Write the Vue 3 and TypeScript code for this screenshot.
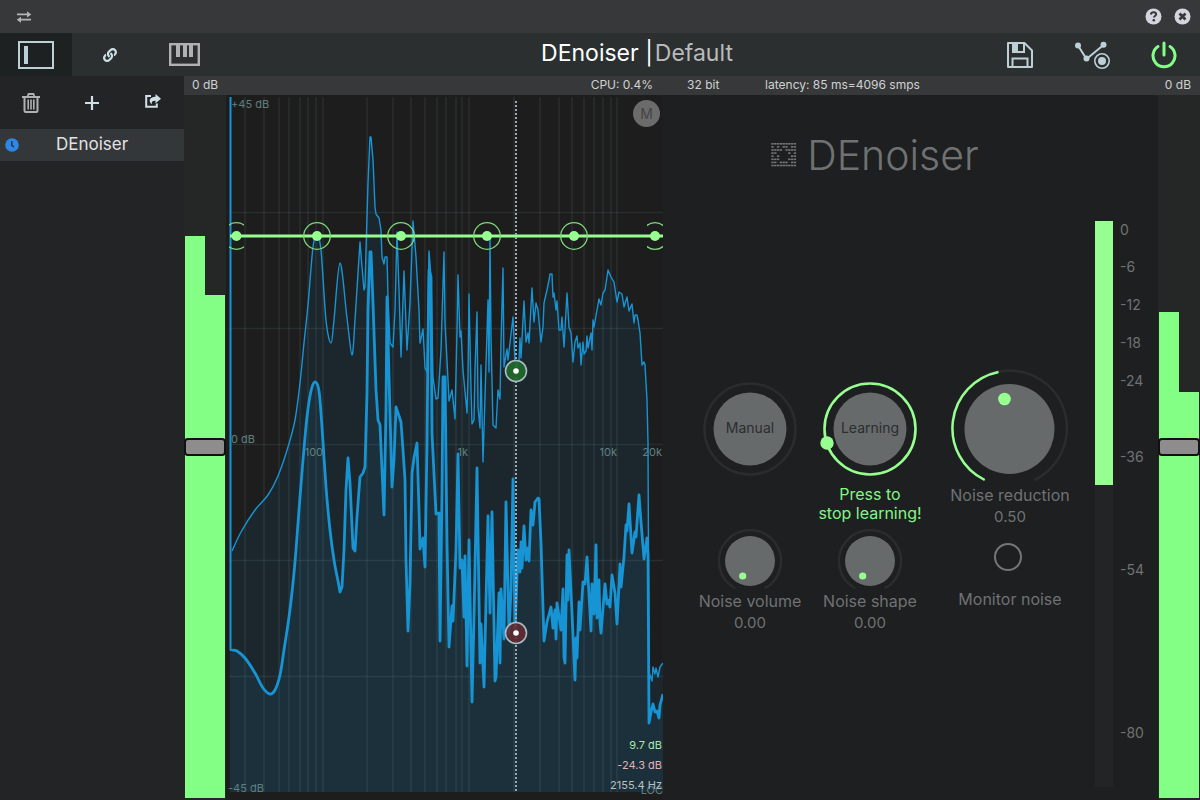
<script setup lang="ts">
import { ref } from 'vue'

type Point = [number, number]

const gridX = [
  245, 264, 279, 289, 300, 308, 316, 323, 367, 393, 411, 425, 437, 446, 456, 462, 469, 514, 540, 559, 572, 584, 594, 603,
  611, 617,
]
const gridY = [212, 328, 444, 560, 676]

const peakLead: Point[] = [
  [232, 551], [241, 532], [255, 510], [268, 495], [278, 476], [288, 447], [295, 420], [300, 383], [304, 343], [308, 305],
  [313, 247], [317, 237], [321, 250], [326, 320], [331, 343], [334, 320], [340, 263], [347, 318], [352, 355], [355, 320],
]
const peakRest: Point[] = [
  [360, 242], [362, 267], [364, 290], [365, 287], [366, 250], [368, 183], [370, 137], [371, 137], [373, 160], [375, 207],
  [376, 214], [379, 218], [381, 230], [382, 257], [384, 264], [385, 257], [387, 257], [388, 297], [390, 343], [393, 347],
  [395, 310], [397, 232], [399, 290], [401, 357], [404, 271], [407, 350], [410, 303], [413, 221], [416, 257], [419, 310],
  [420, 343], [423, 329], [425, 368], [427, 372], [429, 251], [431, 277], [433, 377], [436, 399], [438, 398], [441, 350],
  [444, 252], [445, 323], [447, 360], [449, 401], [452, 390], [455, 419], [457, 330], [458, 275], [460, 337], [461, 331],
  [463, 370], [467, 413], [468, 377], [469, 294], [471, 390], [472, 424], [474, 420], [475, 370], [477, 312], [478, 407],
  [480, 428], [481, 365], [483, 462], [485, 397], [488, 300], [489, 372], [490, 237], [491, 337], [493, 425], [496, 428],
  [498, 390], [500, 399], [501, 343], [503, 268], [504, 367], [507, 349], [508, 360], [510, 343], [513, 317], [515, 360],
  [517, 367], [519, 360], [520, 338], [521, 358], [524, 301], [526, 342], [528, 333], [529, 343], [532, 288], [534, 322],
  [536, 303], [538, 310], [541, 342], [543, 327], [544, 303], [547, 290], [549, 280], [550, 274], [552, 274], [553, 297],
  [554, 293], [556, 310], [557, 301], [559, 330], [561, 330], [562, 317], [564, 347], [567, 293], [569, 327], [571, 333],
  [573, 362], [575, 342], [577, 336], [578, 348], [580, 343], [581, 365], [583, 342], [584, 354], [586, 351], [587, 336],
  [588, 348], [591, 333], [592, 350], [593, 320], [594, 327], [597, 310], [599, 299], [601, 305], [603, 293], [605, 290],
  [608, 270], [611, 277], [614, 282], [617, 302], [619, 292], [622, 294], [624, 307], [627, 297], [629, 311], [632, 304],
  [634, 323], [635, 315], [637, 315], [638, 320], [640, 333], [642, 365], [644, 362], [645, 365], [647, 400], [648, 443],
  [649, 672], [652, 681], [653, 667], [655, 674], [656, 668], [658, 677], [660, 667], [663, 663],
]
const liveLead: Point[] = [
  [232, 650], [237, 651], [245, 658], [255, 673], [263, 688], [270, 694], [275, 690], [280, 675], [284, 650], [289, 617],
  [293, 583], [296, 550], [299, 510], [303, 460], [307, 417], [311, 391], [315, 382], [319, 391], [322, 427], [326, 487],
  [330, 530], [334, 560], [338, 581],
]
const liveRest: Point[] = [
  [340, 592], [342, 587], [344, 550], [346, 490], [348, 458], [350, 483], [353, 548], [355, 551], [357, 517], [360, 477],
  [363, 473], [365, 467], [367, 393], [368, 310], [370, 252], [371, 252], [373, 303], [376, 390], [378, 420], [380, 425],
  [382, 470], [384, 515], [386, 410], [387, 297], [389, 377], [392, 487], [394, 460], [396, 407], [398, 413], [401, 422],
  [403, 450], [405, 480], [406, 560], [408, 631], [410, 583], [412, 473], [414, 458], [417, 443], [419, 510], [420, 549],
  [423, 538], [425, 567], [427, 443], [428, 343], [429, 270], [431, 277], [432, 433], [436, 514], [439, 513], [440, 641],
  [442, 493], [443, 377], [445, 377], [447, 543], [449, 647], [452, 606], [453, 621], [456, 550], [458, 454], [460, 568],
  [462, 560], [464, 617], [465, 556], [467, 666], [469, 540], [472, 702], [474, 617], [477, 468], [480, 663], [481, 624],
  [484, 687], [488, 516], [490, 613], [492, 512], [495, 681], [496, 677], [499, 593], [500, 663], [501, 589], [504, 639],
  [506, 502], [509, 633], [511, 590], [513, 479], [515, 630], [518, 550], [520, 572], [521, 542], [522, 568], [524, 526],
  [526, 560], [528, 548], [529, 561], [531, 510], [533, 525], [535, 502], [538, 498], [539, 499], [541, 543], [544, 641],
  [547, 622], [551, 607], [553, 628], [555, 610], [556, 639], [557, 603], [561, 630], [563, 589], [564, 657], [565, 663],
  [567, 555], [568, 600], [569, 550], [572, 613], [575, 680], [576, 638], [577, 658], [579, 602], [580, 630], [583, 582],
  [585, 584], [587, 557], [588, 577], [591, 631], [592, 584], [594, 614], [596, 545], [597, 618], [599, 580], [600, 623],
  [601, 633], [605, 584], [607, 604], [608, 600], [610, 607], [612, 575], [615, 593], [617, 624], [620, 564], [621, 587],
  [624, 557], [626, 525], [627, 531], [629, 504], [632, 553], [635, 532], [636, 537], [639, 495], [641, 522], [644, 559],
  [647, 538], [648, 555], [649, 723], [651, 712], [653, 704], [655, 712], [657, 711], [659, 718], [660, 705], [663, 694],
]

// Rounds the slow low-frequency section; the dense part stays as straight segments.
function smooth(points: Point[]): string {
  let d = `M${points[0][0]} ${points[0][1]}`
  for (let i = 0; i < points.length - 1; i++) {
    const a = points[Math.max(0, i - 1)]
    const b = points[i]
    const c = points[i + 1]
    const e = points[Math.min(points.length - 1, i + 2)]
    d += `C${b[0] + (c[0] - a[0]) / 6} ${b[1] + (c[1] - a[1]) / 6} ${c[0] - (e[0] - b[0]) / 6} ${c[1] - (e[1] - b[1]) / 6} ${c[0]} ${c[1]}`
  }
  return d
}
const segments = (points: Point[]): string => points.map((p) => `L${p[0]} ${p[1]}`).join('')

const peakPath = smooth(peakLead) + segments(peakRest)
const livePath = smooth(liveLead) + segments(liveRest)
const peakArea = `${peakPath}L663 792L230 792L230 551Z`
const liveArea = `${livePath}L663 792L230 792L230 650Z`

const nodes = [317, 401, 487, 574]
const scale = [
  { label: '0', span: 37 },
  { label: '-6', span: 38 },
  { label: '-12', span: 38 },
  { label: '-18', span: 38 },
  { label: '-24', span: 76 },
  { label: '-36', span: 113 },
  { label: '-54', span: 163 },
  { label: '-80', span: 57 },
]
const logo = ['111111111', '101011011', '111101111', '110000101', '101000011', '111000111', '110111011', '111111111']

const inputGain = ref(50)
const outputGain = ref(50)
const reduction = ref(0.5)
const noiseVolume = ref(0)
const noiseShape = ref(0)
const monitor = ref(false)
</script>

<template>
  <div class="app">
    <header class="titlebar">
      <button class="plain" aria-label="Swap">
        <svg width="16" height="12" viewBox="0 0 16 12" fill="#b3b5b5">
          <path d="M1 2.5h10V.3L15.3 3.4 11 6.4V4.3H1zM15 7.8H5V5.7L.7 8.7 5 11.8V9.6h10z" />
        </svg>
      </button>
      <div class="window-actions">
        <button class="plain" aria-label="Help">
          <svg width="17" height="17" viewBox="0 0 17 17">
            <circle cx="8.5" cy="8.5" r="8" fill="#d3d5de" />
            <path d="M5.8 6.5c.3-1.7 1.3-2.3 2.8-2.3 1.4 0 2.5.8 2.5 2 0 1.700-2.200 1.800-2.200 3.400" fill="none" stroke="#373839" stroke-width="2" />
            <circle cx="8.800" cy="12.200" r="1.300" fill="#373839" />
          </svg>
        </button>
        <button class="plain" aria-label="Close">
          <svg width="17" height="17" viewBox="0 0 17 17">
            <circle cx="8.500" cy="8.500" r="8" fill="#d3d5de" />
            <path d="M5.500 5.500l6 6M11.500 5.500l-6 6" stroke="#373839" stroke-width="2.800" />
          </svg>
        </button>
      </div>
    </header>

    <nav class="toolbar">
      <div class="tabs">
        <button class="tab active" aria-label="Toggle sidebar">
          <svg width="36" height="28" viewBox="0 0 36 28">
            <rect x="1" y="1" width="34" height="26" fill="none" stroke="#bdd0d6" stroke-width="2" />
            <rect x="6" y="5" width="4" height="18" fill="#bdd0d6" />
          </svg>
        </button>
        <button class="tab" aria-label="Link">
          <svg width="14" height="14" viewBox="0 0 512 512" fill="#cfe0e6">
            <path d="M326.600 185.400c59.700 59.800 58.900 155.700.4 214.600-.1.100-.2.300-.4.400l-67.200 67.200c-59.300 59.300-155.700 59.300-215 0-59.300-59.300-59.300-155.700 0-215l37.100-37.100c9.800-9.800 26.800-3.300 27.300 10.600.6 17.700 3.800 35.500 9.700 52.700 2 5.800.6 12.200-3.800 16.600l-13.100 13.100c-28 28-28.900 73.700-1.200 102 28 28.600 74.100 28.700 102.300.5l67.200-67.200c28.200-28.200 28.100-73.800 0-101.800-3.700-3.700-7.400-6.600-10.300-8.600a16 16 0 0 1-6.900-12.600c-.4-10.600 3.300-21.500 11.700-29.800l21.100-21.100c5.500-5.500 14.200-6.200 20.600-1.700a152.500 152.500 0 0 1 20.500 17.200zM467.500 44.400c-59.300-59.300-155.700-59.300-215 0l-67.200 67.200c-.1.100-.3.300-.4.400-58.600 58.900-59.400 154.800.4 214.600a152.500 152.500 0 0 0 20.500 17.200c6.400 4.500 15.100 3.800 20.600-1.700l21.100-21.100c8.400-8.400 12.100-19.200 11.700-29.800a16 16 0 0 0-6.900-12.600c-2.900-2-6.600-4.900-10.300-8.600-28.100-28.100-28.200-73.600 0-101.800l67.200-67.200c28.200-28.200 74.300-28.100 102.300.5 27.800 28.300 26.900 73.900-1.200 102l-13.100 13.100c-4.400 4.400-5.800 10.800-3.800 16.600 5.900 17.200 9 35 9.700 52.700.5 13.900 17.500 20.400 27.300 10.600l37.100-37.100c59.300-59.300 59.300-155.700 0-215z" />
          </svg>
        </button>
        <button class="tab" aria-label="Keyboard">
          <svg width="31" height="23" viewBox="0 0 31 23">
            <rect x="1.200" y="1.200" width="28.600" height="20.600" fill="none" stroke="#b1b1b1" stroke-width="2.400" />
            <path d="M7 1h4v13H7zM14 1h4v13h-4zM20 1h4v13h-4z" fill="#b1b1b1" />
          </svg>
        </button>
      </div>
      <h1 class="title">DEnoiser |<span>Default</span></h1>
      <div class="actions">
        <button class="plain" aria-label="Save preset">
          <svg width="26" height="26" viewBox="0 0 26 26" fill="none" stroke="#bdd0d6" stroke-width="2">
            <path d="M1 1h16.500L25 8.500V25H1z" stroke-linejoin="round" />
            <path d="M6 1.500V10h11V1.500M5.500 25v-8.500h15V25" />
            <path d="M6 1h5v9H6z" fill="#bdd0d6" stroke="none" />
          </svg>
        </button>
        <button class="plain" aria-label="Automation">
          <svg width="36" height="28" viewBox="0 0 36 28">
            <path d="M4 4.500L12.500 18 29.500 4" fill="none" stroke="#bdd0d6" stroke-width="2" />
            <circle cx="4" cy="4.500" r="3" fill="#bdd0d6" />
            <circle cx="12.500" cy="17.500" r="3" fill="#bdd0d6" />
            <circle cx="29.500" cy="3.800" r="3" fill="#bdd0d6" />
            <circle cx="28" cy="20" r="7.200" fill="#2b2f30" stroke="#bdd0d6" stroke-width="1.600" />
            <circle cx="28" cy="20" r="4" fill="#bdd0d6" />
          </svg>
        </button>
        <button class="plain" aria-label="Power">
          <svg width="26" height="28" viewBox="0 0 26 28" fill="none" stroke="#84ff85" stroke-width="3" stroke-linecap="round">
            <path d="M13 2v12M7 5.500a11 11 0 1 0 12 0" />
          </svg>
        </button>
      </div>
    </nav>

    <div class="workspace">
      <aside class="sidebar">
        <div class="sidebar-tools">
          <button class="plain" aria-label="Delete">
            <svg width="18" height="20" viewBox="0 0 18 20" fill="none" stroke="#b1b1b1">
              <path d="M0 4h18M5.500 4l1-3h5l1 3" stroke-width="1.800" />
              <path d="M2.500 4v13.500q0 1.600 1.600 1.600h9.800q1.600 0 1.600-1.600V4" stroke-width="2" />
              <path d="M6.200 6.500v10M9 6.500v10M11.800 6.500v10" stroke-width="1.600" />
            </svg>
          </button>
          <button class="plain" aria-label="Add">
            <svg width="14" height="14" viewBox="0 0 14 14"><path d="M7 0v14M0 7h14" stroke="#cfe0e6" stroke-width="2.200" /></svg>
          </button>
          <button class="plain share" aria-label="Share">
            <svg width="16" height="14" viewBox="0 0 16 14">
              <path d="M6 2H1.200v10.800h10.600V9.500" fill="none" stroke="#cfe0e6" stroke-width="2" />
              <path d="M10.500 0L16 4.700l-5.500 4.600V6.700C7.500 6.600 6.300 7.600 7 10.200 3.200 7.500 4 3 10.500 2.700z" fill="#cfe0e6" />
            </svg>
          </button>
        </div>
        <button class="preset">
          <svg width="14" height="14" viewBox="0 0 14 14">
            <circle cx="7" cy="7" r="6.800" fill="#2f86e4" />
            <path d="M6.800 3v4.300l2.200 1.500" fill="none" stroke="#1c3a5c" stroke-width="1.500" />
          </svg>
          <span>DEnoiser</span>
        </button>
      </aside>

      <main class="main">
        <div class="status">
          <span>0 dB</span>
          <span class="cpu">CPU: 0.4%</span>
          <span class="bits">32 bit</span>
          <span class="latency">latency: 85 ms=4096 smps</span>
          <span class="out">0 dB</span>
        </div>

        <label class="meter input-meter">
          <i class="bar bar-a"></i><i class="bar bar-b"></i><i class="handle"></i>
          <input v-model="inputGain" type="range" aria-label="Input gain" />
        </label>

        <section class="graph">
          <svg class="plot" viewBox="226 95 437 705" preserveAspectRatio="none">
            <defs>
              <clipPath id="edge-left"><rect x="229" y="220" width="15" height="32" /></clipPath>
              <clipPath id="edge-right"><rect x="647" y="220" width="16" height="32" /></clipPath>
            </defs>
            <path :d="peakArea" fill="#1793d1" fill-opacity="0.090" />
            <path :d="liveArea" fill="#1793d1" fill-opacity="0.090" />
            <g stroke="#6f9a9a" stroke-opacity="0.140" stroke-width="1.500">
              <path v-for="x in gridX" :key="'x' + x" :d="`M${x} 97V792`" />
              <path v-for="y in gridY" :key="'y' + y" :d="`M229 ${y + 0.5}H663`" />
            </g>
            <path :d="peakPath" class="peak" />
            <path :d="livePath" class="live" />
            <path d="M230.500 97V650H232" class="edge" />
            <path d="M230 236H663" stroke="#96ff8f" stroke-width="3" />
            <path d="M516 101V792" stroke="#9ba8b5" stroke-width="2" stroke-dasharray="2 2" />
            <g fill="none" stroke="#7fd97a" stroke-width="1.300">
              <circle cx="236.500" cy="236" r="13.300" clip-path="url(#edge-left)" />
              <circle v-for="x in nodes" :key="x" :cx="x" cy="236" r="13.300" />
              <circle cx="655" cy="236" r="13.300" clip-path="url(#edge-right)" />
            </g>
            <g fill="#96ff8f">
              <circle v-for="x in [236.5, ...nodes, 655]" :key="'n' + x" :cx="x" cy="236" r="5" />
            </g>
            <circle cx="516" cy="371" r="10.500" fill="#1f6a2a" fill-opacity="0.920" stroke="#a9bac6" stroke-width="1.600" />
            <circle cx="516" cy="371" r="2.800" fill="#fff" />
            <circle cx="516" cy="633" r="10.500" fill="#642a30" fill-opacity="0.880" stroke="#a9bac6" stroke-width="1.600" />
            <circle cx="516" cy="633" r="2.800" fill="#fff" />
          </svg>
          <span class="axis db-top">+45 dB</span>
          <span class="axis db-mid">0 dB</span>
          <span class="axis db-low">-45 dB</span>
          <span class="axis f100">100</span>
          <span class="axis f1k">1k</span>
          <span class="axis f10k">10k</span>
          <span class="axis f20k">20k</span>
          <span class="axis loc">LOC</span>
          <div class="readout">
            <span class="peak-db">9.7 dB</span>
            <span class="live-db">-24.3 dB</span>
            <span>2155.4 Hz</span>
          </div>
          <button class="mode">M</button>
        </section>

        <section class="panel">
          <div class="controls">
            <h2 class="brand">
              <svg width="26" height="24" viewBox="0 0 26 24" fill="#747676">
                <template v-for="(row, r) in logo" :key="r">
                  <template v-for="(bit, c) in row" :key="c">
                    <rect v-if="bit === '1'" :x="c * 2.8 + 0.3" :y="r * 3.1" width="2.400" height="1.600" />
                  </template>
                </template>
              </svg>
              DEnoiser
            </h2>
            <div class="knobs">
              <div class="cell">
                <button class="round">
                  <svg width="120" height="116" viewBox="0 0 120 116">
                    <circle cx="60" cy="60" r="45.500" fill="none" stroke="#2b2c2e" stroke-width="2.500" />
                    <circle cx="60" cy="60" r="36.500" fill="#676a6b" />
                  </svg>
                  <span>Manual</span>
                </button>
              </div>
              <div class="cell">
                <button class="round">
                  <svg width="120" height="116" viewBox="0 0 120 116">
                    <circle cx="60" cy="60" r="45.500" fill="none" stroke="#96ff8f" stroke-width="2.600" />
                    <circle cx="60" cy="60" r="36.500" fill="#676a6b" />
                    <circle cx="17" cy="74" r="6.700" fill="#96ff8f" />
                  </svg>
                  <span>Learning</span>
                </button>
                <p class="hint">Press to<br />stop learning!</p>
              </div>
              <label class="cell">
                <svg width="120" height="116" viewBox="0 0 120 116" fill="none" stroke-width="2.500">
                  <path d="M34.700 111A57.500 57.500 0 1 1 84.300 111" stroke="#2b2c2e" />
                  <path d="M34.700 111A57.500 57.500 0 0 1 48.500 3" stroke="#96ff8f" />
                  <circle cx="59.500" cy="60" r="45" fill="#676a6b" />
                  <circle cx="54.500" cy="30" r="6.300" fill="#96ff8f" />
                </svg>
                <span>Noise reduction</span>
                <output>{{ Number(reduction).toFixed(2) }}</output>
                <input v-model="reduction" type="range" min="0" max="1" step="0.01" />
              </label>
              <label class="cell">
                <svg width="64" height="62" viewBox="0 0 64 62">
                  <path d="M17.500 59.500A31 31 0 1 1 46.500 59.500" fill="none" stroke="#2b2c2e" stroke-width="2.500" />
                  <circle cx="32" cy="32" r="25" fill="#676a6b" />
                  <circle cx="24.700" cy="47" r="3.600" fill="#96ff8f" />
                </svg>
                <span>Noise volume</span>
                <output>{{ Number(noiseVolume).toFixed(2) }}</output>
                <input v-model="noiseVolume" type="range" min="0" max="1" step="0.01" />
              </label>
              <label class="cell">
                <svg width="64" height="62" viewBox="0 0 64 62">
                  <path d="M17.500 59.500A31 31 0 1 1 46.500 59.500" fill="none" stroke="#2b2c2e" stroke-width="2.500" />
                  <circle cx="32" cy="32" r="25" fill="#676a6b" />
                  <circle cx="24.700" cy="47" r="3.600" fill="#96ff8f" />
                </svg>
                <span>Noise shape</span>
                <output>{{ Number(noiseShape).toFixed(2) }}</output>
                <input v-model="noiseShape" type="range" min="0" max="1" step="0.01" />
              </label>
              <label class="cell monitor">
                <input v-model="monitor" type="checkbox" />
                <span>Monitor noise</span>
              </label>
            </div>
          </div>
          <div class="level"><div class="level-fill"></div></div>
          <div class="scale">
            <div v-for="tick in scale" :key="tick.label" class="tick" :style="{ flexGrow: tick.span }">
              <span>{{ tick.label }}</span>
            </div>
          </div>
        </section>

        <label class="meter output-meter">
          <i class="bar bar-a"></i><i class="bar bar-b"></i><i class="handle"></i>
          <input v-model="outputGain" type="range" aria-label="Output gain" />
        </label>
      </main>
    </div>
  </div>
</template>

<style>
body {
  background: #1d1f21;
}
</style>

<style scoped>
.app {
  display: flex;
  flex-direction: column;
  min-height: 100vh;
  background: #1d1f21;
  color: #d0d2d2;
  font-family: Inter, 'Open Sans', sans-serif;
  font-size: 14px;
}
* {
  box-sizing: border-box;
}
button {
  font: inherit;
  color: inherit;
  border: 0;
  padding: 0;
  background: none;
  cursor: pointer;
}
svg {
  display: block;
}
.plain {
  display: flex;
  align-items: center;
  justify-content: center;
}
.titlebar {
  display: flex;
  align-items: center;
  justify-content: space-between;
  height: 33px;
  padding: 0 9px 0 16px;
  background: #373839;
}
.window-actions {
  display: flex;
  gap: 12px;
}
.toolbar {
  display: flex;
  height: 43px;
  background: #2b2f30;
}
.tabs {
  display: flex;
  width: 290px;
}
.tab {
  display: flex;
  align-items: center;
  justify-content: center;
  width: 75px;
}
.tab.active {
  width: 72px;
  background: #1d2122;
}
.title {
  flex: 1;
  margin: 0;
  font-size: 23px;
  font-weight: 400;
  line-height: 41px;
  text-align: center;
  color: #fff;
}
.title span {
  margin-left: 2px;
  color: #b9bbbb;
}
.actions {
  display: grid;
  grid-template-columns: repeat(3, 72px);
}
.workspace {
  display: flex;
  flex: 1;
}
.sidebar {
  width: 184px;
  background: #232426;
}
.sidebar-tools {
  display: grid;
  grid-template-columns: repeat(3, 1fr);
  height: 53px;
}
.share {
  padding-bottom: 3px;
}
.preset {
  display: flex;
  align-items: center;
  width: 100%;
  height: 32px;
  padding: 0 5px;
  background: #34373a;
  font-size: 17px;
  color: #e2e2e2;
}
.preset span {
  flex: 1;
  padding: 0 14px 2px 0;
}
.main {
  flex: 1;
  display: grid;
  grid-template-columns: 42px 437fr 495fr 42px;
  grid-template-rows: 19px 1fr;
}
.status {
  grid-column: 1 / -1;
  display: flex;
  padding: 0 9px 0 8px;
  background: #373839;
  font-size: 12px;
  line-height: 17px;
}
.cpu {
  margin-left: auto;
}
.bits {
  width: 68px;
  margin-left: 34px;
}
.latency {
  margin-left: 10px;
}
.out {
  margin-left: 245px;
}
.meter {
  position: relative;
  display: grid;
  grid-template-columns: 1fr 1fr;
  padding: 0 1px 2px;
  background: #242725;
}
.meter input,
.cell input[type='range'] {
  position: absolute;
  inset: 0;
  width: 100%;
  height: 100%;
  margin: 0;
  opacity: 0;
}
.bar {
  align-self: end;
  background: #84ff85;
}
.input-meter .bar-a {
  height: 80%;
}
.input-meter .bar-b {
  height: 71.6%;
}
.output-meter .bar-a {
  height: 69.1%;
}
.output-meter .bar-b {
  height: 57.8%;
}
.handle {
  position: absolute;
  left: 0;
  right: 0;
  top: 50%;
  height: 18px;
  margin-top: -10px;
  border: 2px solid #111;
  border-radius: 4px;
  background: #8e8c8d;
}
.graph {
  position: relative;
  background: #1d1d1d;
}
.plot {
  position: absolute;
  inset: 0;
  width: 100%;
  height: 100%;
}
.peak,
.live,
.edge {
  fill: none;
  stroke: #1794d4;
  stroke-width: 1.400;
  stroke-linejoin: round;
}
.live {
  stroke-width: 2.800;
}
.edge {
  stroke-width: 2;
}
.axis {
  position: absolute;
  font-size: 11px;
  line-height: 14px;
  color: #5f8080;
}
.db-top {
  left: 5px;
  top: 2px;
}
.db-mid {
  left: 5px;
  bottom: 354px;
}
.db-low {
  left: 2px;
  bottom: 5px;
}
.f100,
.f1k,
.f10k,
.f20k {
  bottom: 341px;
}
.f100 {
  left: 18%;
}
.f1k {
  left: 53%;
}
.f10k {
  right: 46px;
}
.f20k {
  right: 1px;
}
.loc {
  right: 0;
  bottom: 3px;
}
.readout {
  position: absolute;
  right: 1px;
  bottom: 5px;
  display: flex;
  flex-direction: column;
  text-align: right;
  font-size: 11px;
  line-height: 20px;
  color: #b9c1c4;
}
.peak-db {
  color: #a9e8a8;
}
.live-db {
  color: #e3b1b3;
}
.mode {
  position: absolute;
  right: 3px;
  top: 5px;
  width: 27px;
  height: 27px;
  border-radius: 50%;
  background: #6b6b6b;
  color: #444;
}
.panel {
  display: flex;
  justify-content: flex-end;
  background: #1d1f21;
}
.controls {
  flex: 1;
}
.brand {
  display: flex;
  align-items: center;
  justify-content: center;
  gap: 10px;
  height: 120px;
  margin: 0 0 154px;
  padding-right: 8px;
  font-size: 41px;
  font-weight: 300;
  color: #707272;
}
.knobs {
  display: grid;
  grid-template-columns: 120px 120px 160px;
  grid-template-rows: 160px auto;
  justify-content: center;
  padding-left: 22px;
}
.cell {
  position: relative;
  display: flex;
  flex-direction: column;
  align-items: center;
  font-size: 16px;
  line-height: 21px;
  color: #707272;
}
.cell output {
  font-size: 15px;
}
.round {
  display: grid;
  place-items: center;
  font-size: 14px;
  color: #2b2d2e;
}
.round svg,
.round span {
  grid-area: 1 / 1;
}
.hint {
  margin: 0;
  text-align: center;
  line-height: 19px;
  color: #84f584;
}
.monitor input {
  appearance: none;
  width: 28px;
  height: 28px;
  margin: 14px 4px 18px 0;
  border: 2px solid #747676;
  border-radius: 50%;
}
.level {
  width: 18px;
  margin: 126px 0 13px;
  background: #232426;
}
.level-fill {
  height: 46.7%;
  background: #96ff8f;
}
.scale {
  display: flex;
  flex-direction: column;
  width: 45px;
  margin: 126px 0 0;
  padding: 0 0 19px 7px;
  color: #707272;
}
.tick {
  flex-basis: 0;
  line-height: 18px;
}
</style>
